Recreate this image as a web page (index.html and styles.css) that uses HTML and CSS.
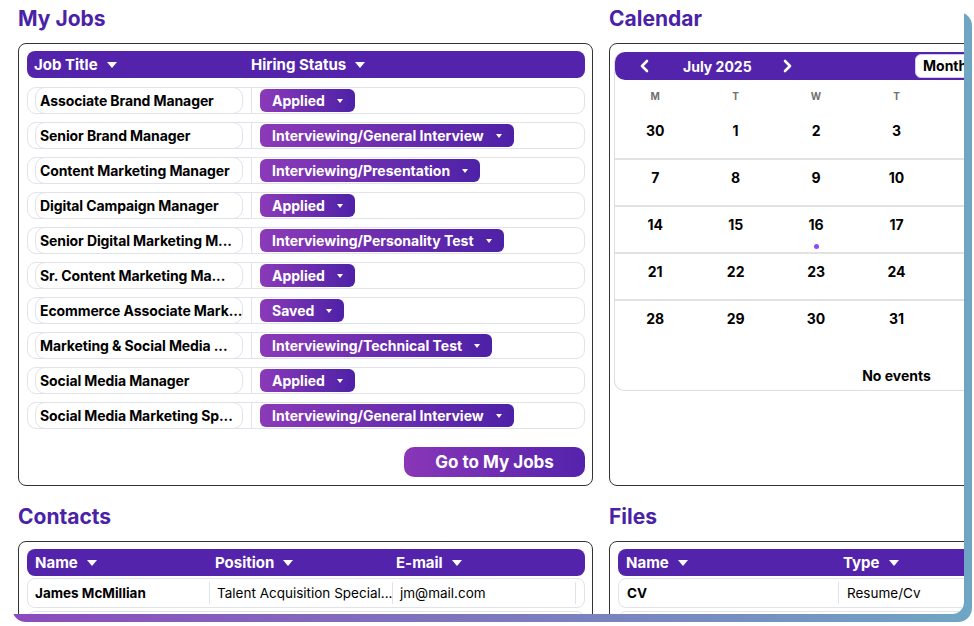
FILE: index.html
```
<!DOCTYPE html>
<html lang="en">
  <head>
    <meta charset="UTF-8" />
    <meta name="viewport" content="width=device-width, initial-scale=1.0" />
    <title>Dashboard</title>
    <link rel="stylesheet" href="styles.css">
  </head>
  <body>
    <div class="frame">
      <div class="screen">
        <div class="board">
          <section>
            <h2>My Jobs</h2>
            <div class="card jobs">
              <div class="thead jobs-head">
                <span class="th">Job Title <i class="caret"></i></span>
                <span class="th">Hiring Status <i class="caret"></i></span>
              </div>
              <div class="job-list">
                <div class="job-row"><div class="job-title">Associate Brand Manager</div><div class="job-status"><span class="pill">Applied <i class="caret mini"></i></span></div></div>
                <div class="job-row"><div class="job-title">Senior Brand Manager</div><div class="job-status"><span class="pill">Interviewing/General Interview <i class="caret mini"></i></span></div></div>
                <div class="job-row"><div class="job-title">Content Marketing Manager</div><div class="job-status"><span class="pill">Interviewing/Presentation <i class="caret mini"></i></span></div></div>
                <div class="job-row"><div class="job-title">Digital Campaign Manager</div><div class="job-status"><span class="pill">Applied <i class="caret mini"></i></span></div></div>
                <div class="job-row"><div class="job-title">Senior Digital Marketing M...</div><div class="job-status"><span class="pill">Interviewing/Personality Test <i class="caret mini"></i></span></div></div>
                <div class="job-row"><div class="job-title">Sr. Content Marketing Ma...</div><div class="job-status"><span class="pill">Applied <i class="caret mini"></i></span></div></div>
                <div class="job-row"><div class="job-title">Ecommerce Associate Mark...</div><div class="job-status"><span class="pill">Saved <i class="caret mini"></i></span></div></div>
                <div class="job-row"><div class="job-title">Marketing &amp; Social Media ...</div><div class="job-status"><span class="pill">Interviewing/Technical Test <i class="caret mini"></i></span></div></div>
                <div class="job-row"><div class="job-title">Social Media Manager</div><div class="job-status"><span class="pill">Applied <i class="caret mini"></i></span></div></div>
                <div class="job-row"><div class="job-title">Social Media Marketing Sp...</div><div class="job-status"><span class="pill">Interviewing/General Interview <i class="caret mini"></i></span></div></div>
              </div>
              <button class="go">Go to My Jobs</button>
            </div>
          </section>

          <section>
            <h2>Calendar</h2>
            <div class="card calendar">
              <div class="cal">
                <div class="cal-bar">
                  <svg class="chev prev" width="10" height="14" viewBox="0 0 10 14"><polyline points="8,2 3,7 8,12" /></svg>
                  <span class="cal-title">July 2025</span>
                  <svg class="chev next" width="10" height="14" viewBox="0 0 10 14"><polyline points="2,2 7,7 2,12" /></svg>
                  <div class="views">
                    <span class="view active">Month</span>
                    <span class="view">Week</span>
                    <span class="view">Day</span>
                    <span class="view">List</span>
                  </div>
                </div>
                <div class="weekdays">
                  <span>M</span><span>T</span><span>W</span><span>T</span><span>F</span><span>S</span><span>S</span>
                </div>
                <div class="week"><span>30</span><span>1</span><span>2</span><span>3</span><span>4</span><span>5</span><span>6</span></div>
                <div class="week"><span>7</span><span>8</span><span>9</span><span>10</span><span>11</span><span>12</span><span>13</span></div>
                <div class="week"><span>14</span><span>15</span><span>16<b class="dot"></b></span><span>17</span><span>18</span><span>19</span><span>20</span></div>
                <div class="week"><span>21</span><span>22</span><span>23</span><span>24</span><span>25</span><span>26</span><span>27</span></div>
                <div class="week last"><span>28</span><span>29</span><span>30</span><span>31</span><span>1</span><span>2</span><span>3</span></div>
                <div class="no-events">No events</div>
              </div>
            </div>
          </section>

          <section>
            <h2>Contacts</h2>
            <div class="card contacts">
              <div class="thead contacts-head">
                <span class="th">Name <i class="caret"></i></span>
                <span class="th">Position <i class="caret"></i></span>
                <span class="th">E-mail <i class="caret"></i></span>
              </div>
              <div class="list">
                <div class="row contact-row"><span class="strong">James McMillian</span><span>Talent Acquisition Special...</span><span>jm@mail.com</span><span></span></div>
                <div class="row contact-row"><span class="strong">Laura Bennett</span><span>HR Manager</span><span>lb@mail.com</span><span></span></div>
              </div>
            </div>
          </section>

          <section>
            <h2>Files</h2>
            <div class="card files">
              <div class="thead files-head">
                <span class="th">Name <i class="caret"></i></span>
                <span class="th">Type <i class="caret"></i></span>
              </div>
              <div class="list">
                <div class="row file-row"><span class="strong">CV</span><span>Resume/Cv</span></div>
                <div class="row file-row"><span class="strong">Cover Letter</span><span>Cover Letter</span></div>
              </div>
            </div>
          </section>
        </div>
      </div>
    </div>
  </body>
</html>
```

FILE: styles.css
```
body {
  margin: 0;
  background: #fff;
  font-family: Inter, "Noto Sans", sans-serif;
  color: #000;
}
.frame {
  position: relative;
  width: 974px;
  height: 626px;
}
/* coloured edge peeking out behind the page */
.frame::before {
  content: "";
  position: absolute;
  left: 12px;
  top: 12px;
  width: 960px;
  height: 610px;
  border-radius: 14px;
  background: linear-gradient(90deg, #8c4bbd 0%, #7d78bf 50%, #6fa6c4 100%);
}
.screen {
  position: relative;
  width: 964px;
  height: 614px;
  background: #fff;
  border-radius: 0 0 12px 0;
  overflow: hidden;
}
.board {
  display: grid;
  grid-template-columns: 575px 575px;
  column-gap: 16px;
  row-gap: 18px;
  padding: 6px 0 0 18px;
}
h2 {
  margin: 0 0 11px;
  font-size: 21px;
  line-height: 26px;
  font-weight: 700;
  color: #4a22a7;
}
.card {
  box-sizing: border-box;
  border: 1px solid #333;
  border-radius: 8px;
  padding: 7px 7px 8px 8px;
}
.jobs,
.calendar {
  height: 443px;
}
.jobs {
  display: flex;
  flex-direction: column;
}

/* table header bars */
.thead {
  display: grid;
  align-items: center;
  height: 27px;
  background: #5423ac;
  border-radius: 8px;
  color: #fff;
  font-size: 15px;
  font-weight: 700;
}
.th {
  display: flex;
  align-items: center;
  gap: 9px;
}
.caret {
  display: inline-block;
  width: 0;
  height: 0;
  border-left: 5px solid transparent;
  border-right: 5px solid transparent;
  border-top: 6px solid #fff;
}
.caret.mini {
  border-left-width: 3px;
  border-right-width: 3px;
  border-top-width: 4px;
}
.jobs-head {
  grid-template-columns: 224px 1fr;
}
.jobs-head .th:first-child {
  padding-left: 7px;
}

/* job rows */
.job-list {
  display: flex;
  flex-direction: column;
  gap: 8px;
  margin-top: 9px;
}
.job-row {
  box-sizing: border-box;
  display: grid;
  grid-template-columns: 223px 1fr;
  height: 27px;
  border: 1px solid #e2e2ea;
  border-radius: 9px;
}
.job-title {
  box-sizing: border-box;
  display: flex;
  align-items: center;
  width: 208px;
  margin: -1px 0 -1px 7px;
  padding: 0 0 0 4px;
  border: 1px solid #e2e2ea;
  border-radius: 10px;
  font-size: 14px;
  font-weight: 700;
  letter-spacing: -0.1px;
  white-space: nowrap;
  overflow: hidden;
}
.job-status {
  display: flex;
  align-items: center;
  padding-left: 8px;
  border-left: 1px solid #e2e2ea;
}
.pill {
  display: inline-flex;
  align-items: center;
  gap: 12px;
  height: 23px;
  padding: 0 12px;
  border-radius: 6px;
  background: linear-gradient(90deg, #8b3ab8, #4d21a7);
  color: #fff;
  font-size: 14px;
  font-weight: 700;
}
.go {
  align-self: flex-end;
  margin-top: auto;
  width: 181px;
  height: 30px;
  border: none;
  border-radius: 10px;
  background: linear-gradient(90deg, #8a36b8, #5423ac);
  color: #fff;
  font-family: inherit;
  font-size: 17px;
  font-weight: 700;
}

/* calendar widget */
.calendar {
  padding: 8px 4px;
}
.cal {
  border: 1px solid #ddd;
  border-top: none;
  border-radius: 10px;
}
.cal-bar {
  display: flex;
  align-items: center;
  height: 28px;
  padding-left: 24px;
  background: #5423ac;
  border-radius: 10px;
  color: #fff;
}
.chev polyline {
  fill: none;
  stroke: #fff;
  stroke-width: 2.6;
  stroke-linecap: round;
  stroke-linejoin: round;
}
.cal-title {
  margin: 0 31px 0 34px;
  font-size: 14px;
  font-weight: 700;
}
.views {
  display: flex;
  gap: 4px;
  margin-left: auto;
  margin-right: 3px;
}
.view {
  box-sizing: border-box;
  width: 62px;
  height: 24px;
  line-height: 22px;
  padding-left: 7px;
  border-radius: 6px;
  font-size: 14px;
  font-weight: 700;
  color: #fff;
}
.view.active {
  background: #fff;
  color: #000;
  border: 1px solid #d7c9f0;
}
.weekdays,
.week {
  display: grid;
  grid-template-columns: repeat(7, 1fr);
  text-align: center;
}
.weekdays {
  height: 33px;
  line-height: 32px;
  font-size: 10px;
  font-weight: 700;
  color: #707070;
}
.week {
  box-sizing: border-box;
  height: 47px;
  padding-top: 9px;
  border-bottom: 2px solid #e2e2e2;
  font-size: 14px;
  font-weight: 700;
  line-height: 18px;
}
.week.last {
  border-bottom: none;
}
.dot {
  display: block;
  width: 5px;
  height: 5px;
  margin: 10px auto 0;
  border-radius: 50%;
  background: #9146ff;
}
.no-events {
  height: 42px;
  padding-top: 19px;
  box-sizing: border-box;
  text-align: center;
  font-size: 14px;
  font-weight: 700;
  line-height: 18px;
}

/* contacts and files */
.contacts,
.files {
  height: 200px;
}
.contacts-head {
  grid-template-columns: 180px 181px 1fr;
  padding-left: 8px;
}
.files-head {
  grid-template-columns: 217px 1fr;
  padding-left: 8px;
}
.list {
  display: flex;
  flex-direction: column;
  gap: 3px;
  margin-top: 2px;
}
.row {
  box-sizing: border-box;
  display: grid;
  height: 30px;
  border: 1px solid #e2e2ea;
  border-radius: 8px;
  font-size: 13.5px;
}
.row span {
  display: flex;
  align-items: center;
  margin: 3px 0;
  white-space: nowrap;
  overflow: hidden;
}
.contact-row {
  grid-template-columns: 182px 183px 183px 1fr;
}
.contact-row span {
  padding-left: 7px;
  border-right: 1px solid #e2e2ea;
}
.contact-row span:last-child {
  border-right: none;
}
.file-row {
  grid-template-columns: 220px 1fr;
}
.file-row span {
  padding-left: 8px;
}
.file-row span:first-child {
  border-right: 1px solid #e2e2ea;
}
.strong {
  font-weight: 700;
}
```
